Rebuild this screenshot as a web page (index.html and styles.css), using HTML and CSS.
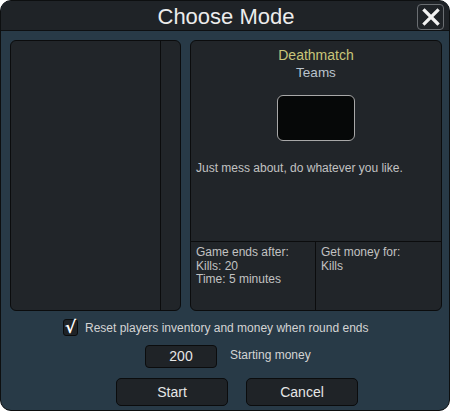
FILE: index.html
```html
<!DOCTYPE html>
<html>
<head>
<meta charset="utf-8">
<link rel="stylesheet" href="styles.css">
</head>
<body>
<div class="dialog">
  <div class="titlebar">
    <span class="title">Choose Mode</span>
    <button class="close" aria-label="Close">
      <svg width="18" height="18" viewBox="0 0 18 18"><path d="M2.5 2.5 L15.5 15.5 M15.5 2.5 L2.5 15.5" stroke="#f2f2f2" stroke-width="3.2" stroke-linecap="square"/></svg>
    </button>
  </div>
  <div class="content">
    <div class="panels">
      <div class="list">
        <div class="list-items"></div>
        <div class="list-scroll"></div>
      </div>
      <div class="info">
        <div class="info-top">
          <div class="mode-name">Deathmatch</div>
          <div class="mode-sub">Teams</div>
          <div class="preview"></div>
          <div class="desc">Just mess about, do whatever you like.</div>
        </div>
        <div class="info-bottom">
          <div class="cell">Game ends after:<br>Kills: 20<br>Time: 5 minutes</div>
          <div class="cell cell-right">Get money for:<br>Kills</div>
        </div>
      </div>
    </div>
    <div class="check-row">
      <span class="checkbox">√</span>
      <span class="check-label">Reset players inventory and money when round ends</span>
    </div>
    <div class="money-row">
      <div class="money-input">200</div>
      <span class="money-label">Starting money</span>
    </div>
    <div class="button-row">
      <button class="btn">Start</button>
      <button class="btn">Cancel</button>
    </div>
  </div>
</div>
</body>
</html>
```
FILE: styles.css
```css
html, body {
  margin: 0;
  padding: 0;
  background: #ffffff;
}
body {
  font-family: "Liberation Sans", Arial, sans-serif;
}
.dialog {
  box-sizing: border-box;
  width: 450px;
  height: 411px;
  border: 1px solid #0d0f10;
  border-radius: 11px;
  overflow: hidden;
  background: #283a47;
  display: flex;
  flex-direction: column;
}
.titlebar {
  position: relative;
  height: 29px;
  background: #1f2327;
  border-bottom: 1px solid #0e1012;
  display: flex;
  align-items: center;
  justify-content: center;
  flex-shrink: 0;
}
.title {
  color: #ececec;
  font-size: 22px;
  margin-left: 2px;
  margin-top: 2px;
}
.close {
  position: absolute;
  right: 5px;
  top: 3px;
  width: 27px;
  height: 26px;
  box-sizing: border-box;
  border: 1px solid #6a6e72;
  border-radius: 4px;
  background: #1f2327;
  padding: 0;
  display: flex;
  align-items: center;
  justify-content: center;
}
.content {
  flex: 1;
  padding: 9px 7px 0 9px;
  display: flex;
  flex-direction: column;
}
.panels {
  display: flex;
  gap: 9px;
  height: 271px;
}
.list {
  box-sizing: border-box;
  width: 171px;
  background: #212529;
  border: 1px solid #0b0c0d;
  border-radius: 6px;
  display: flex;
}
.list-items {
  width: 149px;
  border-right: 1px solid #0b0c0d;
}
.list-scroll {
  flex: 1;
}
.info {
  box-sizing: border-box;
  width: 252px;
  background: #212529;
  border: 1px solid #0b0c0d;
  border-radius: 6px;
  display: flex;
  flex-direction: column;
}
.info-top {
  height: 200px;
  border-bottom: 1px solid #0b0c0d;
  display: flex;
  flex-direction: column;
  align-items: center;
}
.mode-name {
  color: #c9c67a;
  font-size: 14px;
  margin-top: 6px;
  line-height: 16px;
}
.mode-sub {
  color: #b9c3cd;
  font-size: 13.5px;
  line-height: 16px;
  margin-top: 2px;
}
.preview {
  box-sizing: border-box;
  width: 78px;
  height: 46px;
  margin-top: 14px;
  background: #060808;
  border: 1px solid #a8a8a8;
  border-radius: 6px;
}
.desc {
  align-self: flex-start;
  margin-left: 5px;
  margin-top: 20px;
  color: #c2c2c2;
  font-size: 12px;
  line-height: 14px;
}
.info-bottom {
  flex: 1;
  display: flex;
}
.cell {
  width: 119px;
  padding: 4px 0 0 5px;
  color: #c2c2c2;
  font-size: 12px;
  line-height: 13.5px;
}
.cell-right {
  flex: 1;
  border-left: 1px solid #0b0c0d;
}
.check-row {
  display: flex;
  align-items: center;
  margin-top: 8px;
  padding-left: 53px;
  height: 17px;
}
.checkbox {
  box-sizing: border-box;
  width: 15px;
  height: 17px;
  background: #1f2327;
  border: 1px solid #0b0c0d;
  border-radius: 3px;
  color: #ffffff;
  font-size: 17px;
  font-weight: bold;
  line-height: 14px;
  text-align: center;
  font-family: "DejaVu Sans", sans-serif;
}
.check-label {
  margin-left: 7px;
  color: #d4d4d4;
  font-size: 12px;
}
.money-row {
  display: flex;
  align-items: center;
  margin-top: 9px;
  padding-left: 135px;
}
.money-input {
  box-sizing: border-box;
  width: 72px;
  height: 23px;
  background: #1f2327;
  border: 1px solid #0b0c0d;
  border-radius: 4px;
  color: #e6e6e6;
  font-size: 14px;
  text-align: center;
  line-height: 21px;
}
.money-label {
  margin-left: 13px;
  margin-top: -4px;
  color: #d4d4d4;
  font-size: 12px;
}
.button-row {
  display: flex;
  gap: 18px;
  margin-top: 10px;
  padding-left: 106px;
}
.btn {
  box-sizing: border-box;
  width: 112px;
  height: 28px;
  background: #1f2327;
  border: 1px solid #0b0c0d;
  border-radius: 5px;
  color: #e6e6e6;
  font-family: "Liberation Sans", Arial, sans-serif;
  font-size: 14px;
  padding: 0;
}
```
